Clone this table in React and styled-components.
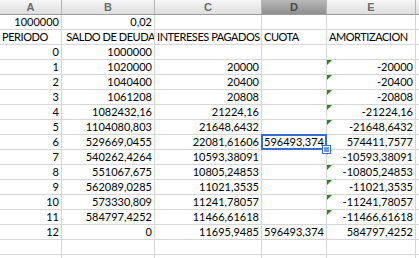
import React from "react";
import styled, { createGlobalStyle } from "styled-components";

const GlobalStyle = createGlobalStyle`
  html, body {
    margin: 0;
    padding: 0;
    background: #ffffff;
    overflow: hidden;
  }
`;

const COLS = "61px 92px 106px 64px 88px 1fr";

const columns = ["A", "B", "C", "D", "E", ""];
const selectedColumn = "D";

// A..E values, then whether E carries the error flag
const rows = [
  [["1000000", "0,02", "", "", ""]],
  [["PERIODO", " SALDO DE DEUDA", "INTERESES PAGADOS", "CUOTA", "AMORTIZACION"]],
  [["0", "1000000", "", "", ""]],
  [["1", "1020000", "20000", "", "-20000"], true],
  [["2", "1040400", "20400", "", "-20400"], true],
  [["3", "1061208", "20808", "", "-20808"], true],
  [["4", "1082432,16", "21224,16", "", "-21224,16"], true],
  [["5", "1104080,803", "21648,6432", "", "-21648,6432"], true],
  [["6", "529669,0455", "22081,61606", "596493,374", "574411,7577"]],
  [["7", "540262,4264", "10593,38091", "", "-10593,38091"], true],
  [["8", "551067,675", "10805,24853", "", "-10805,24853"], true],
  [["9", "562089,0285", "11021,3535", "", "-11021,3535"], true],
  [["10", "573330,809", "11241,78057", "", "-11241,78057"], true],
  [["11", "584797,4252", "11466,61618", "", "-11466,61618"], true],
  [["12", "0", "11695,9485", "596493,374", "584797,4252"]],
  [["", "", "", "", ""]],
  [["", "", "", "", ""]],
];

const Wrapper = styled.div`
  width: 419px;
  height: 258px;
  overflow: hidden;
  font-family: "Lato", "Liberation Sans", sans-serif;
`;

const HeaderRow = styled.div`
  display: grid;
  grid-template-columns: ${COLS};
  column-gap: 1px;
  height: 14px;
  background: #b4b4b4;
  border-bottom: 1px solid #9c9c9c;
`;

const HeaderCell = styled.div`
  display: flex;
  align-items: center;
  justify-content: center;
  font-family: "Liberation Sans", sans-serif;
  font-weight: bold;
  font-size: 11px;
  color: ${(p) => (p.$active ? "#4a4a4a" : "#6c6c6c")};
  background: ${(p) =>
    p.$active
      ? "linear-gradient(#b9b9b9, #8e8e8e)"
      : "linear-gradient(#f6f6f6, #dedede)"};
`;

const Grid = styled.div`
  display: grid;
  grid-template-columns: ${COLS};
  grid-auto-rows: 14px;
  gap: 1px;
  background: #d6d6d6;
  border-bottom: 1px solid #d6d6d6;
`;

const Cell = styled.div`
  position: relative;
  background: #ffffff;
  font-size: 11px;
  line-height: 14px;
  color: #000000;
  white-space: pre;
  padding: ${(p) => (p.$text ? "0 0 0 2px" : "0 2px 0 1px")};
  letter-spacing: ${(p) => (p.$text ? "-0.45px" : "0")};
  text-align: ${(p) => (p.$text ? "left" : "right")};
  overflow: hidden;

  ${(p) =>
    p.$flag &&
    `
    &::before {
      content: "";
      position: absolute;
      left: 0;
      top: 0;
      border-top: 5px solid #1e8a1e;
      border-right: 5px solid transparent;
    }
  `}

  ${(p) =>
    p.$selected &&
    `
    z-index: 2;
    overflow: visible;
    &::after {
      content: "";
      position: absolute;
      left: -1px;
      top: -1px;
      right: -1px;
      bottom: -1px;
      border: 2px solid #3b6ccc;
    }
  `}
`;

const Handle = styled.span`
  position: absolute;
  right: -4px;
  bottom: -4px;
  width: 5px;
  height: 5px;
  background: #6f9ae0;
  border: 1px solid #ffffff;
  outline: 1px solid #3b6ccc;
  z-index: 3;
`;

const isText = (v) => v.trim() !== "" && isNaN(Number(v.replace(",", ".")));

export default function App() {
  return (
    <Wrapper>
      <GlobalStyle />
      <HeaderRow>
        {columns.map((c, i) => (
          <HeaderCell key={i} $active={c === selectedColumn}>
            {c}
          </HeaderCell>
        ))}
      </HeaderRow>
      <Grid>
        {rows.map(([values, flagged], r) =>
          [...values, ""].map((value, c) => {
            const selected = r === 8 && c === 3;
            return (
              <Cell
                key={`${r}-${c}`}
                $text={isText(value)}
                $flag={c === 4 && flagged}
                $selected={selected}
              >
                {value}
                {selected && <Handle />}
              </Cell>
            );
          })
        )}
      </Grid>
    </Wrapper>
  );
}
